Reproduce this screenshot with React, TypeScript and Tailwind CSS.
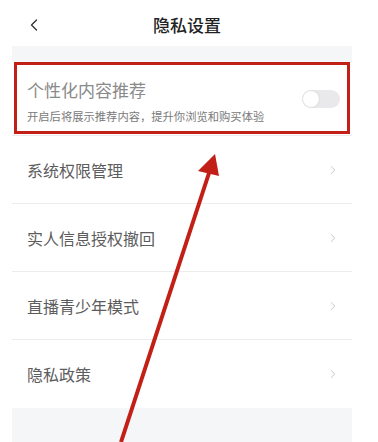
import { ChevronLeft, ChevronRight } from "lucide-react";

const FONT = { fontFamily: '"Noto Sans CJK SC", "Noto Sans", sans-serif' };

const ROWS = ["系统权限管理", "实人信息授权撤回", "直播青少年模式", "隐私政策"];

function Toggle() {
  return (
    <div className="flex h-[18px] w-[38px] items-center rounded-full bg-[#e9e9eb] p-[1px]">
      <div className="h-[16px] w-[16px] rounded-full bg-white shadow-[0_0_2px_rgba(0,0,0,0.15)]" />
    </div>
  );
}

function ListRow({ label }: { label: string }) {
  return (
    <div className="flex h-[68px] items-center justify-between pl-[15px] pr-[12px]">
      <span className="text-[16px] text-[#5c5c5c]">{label}</span>
      <ChevronRight size={14} strokeWidth={1.5} className="text-[#bdbdbd]" />
    </div>
  );
}

export default function App() {
  return (
    <div className="relative h-[442px] w-[378px] overflow-hidden bg-white" style={FONT}>
      {/* header */}
      <div className="flex h-[46px] items-center px-[24px] pt-[4px]">
        <ChevronLeft size={20} strokeWidth={1.6} className="text-[#333]" />
        <div className="flex-1 pr-[24px] text-center text-[17px] font-medium text-[#222]">隐私设置</div>
      </div>

      {/* page body */}
      <div className="ml-[12px] h-[396px] w-[340px] bg-[#f5f6f8] pt-[16px]">
        <div className="bg-white">
          <div className="flex h-[73px] items-center justify-between pl-[15px] pr-[12px]">
            <div className="flex flex-col gap-[8px] pt-[4px]">
              <span className="text-[17px] leading-[22px] text-[#8a8a8a]">个性化内容推荐</span>
              <span className="text-[11.3px] leading-[14px] text-[#7a7a7a]">
                开启后将展示推荐内容，提升你浏览和购买体验
              </span>
            </div>
            <Toggle />
          </div>
          <div className="divide-y divide-[#ececec] border-t border-[#ececec]">
            {ROWS.map((r) => (
              <ListRow key={r} label={r} />
            ))}
          </div>
        </div>
      </div>

      {/* annotation: red box */}
      <div className="absolute left-[14px] top-[62px] h-[72px] w-[336px] border-[3px] border-[#c21f17]" />

      {/* annotation: red arrow */}
      <svg className="absolute left-0 top-0" width="378" height="442" viewBox="0 0 378 442">
        <line x1="121" y1="442" x2="210" y2="170" stroke="#c21f17" strokeWidth="4" />
        <polygon points="215,154 198,171 219,176" fill="#c21f17" />
      </svg>
    </div>
  );
}
